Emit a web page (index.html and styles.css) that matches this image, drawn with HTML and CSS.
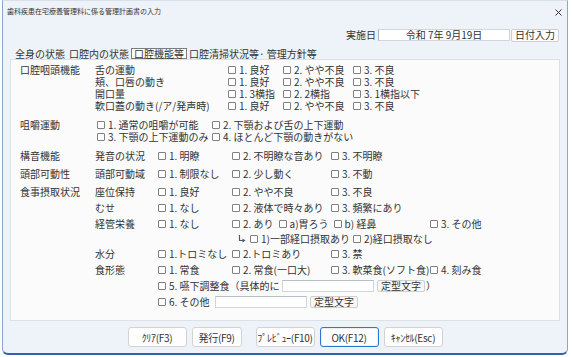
FILE: index.html
```html
<!DOCTYPE html>
<html lang="ja">

<head>
    <meta charset="UTF-8">
    <meta name="viewport" content="width=device-width, initial-scale=1.0">
    <title>歯科疾患在宅療養管理料に係る管理計画書の入力</title>
    <link rel="stylesheet" href="styles.css">
</head>

<body>

    <div class="window">
        <div class="titlebar">
            <span class="title">歯科疾患在宅療養管理料に係る管理計画書の入力</span>
            <svg class="close" width="7" height="7" viewBox="0 0 7 7">
                <path d="M0.5 0.5 L6.5 6.5 M6.5 0.5 L0.5 6.5" stroke="#333" stroke-width="1" fill="none" />
            </svg>
        </div>

        <div class="date-row">
            <span class="date-label">実施日</span>
            <div class="date-field">令和 7年 9月19日</div>
            <button class="button small">日付入力</button>
        </div>

        <div class="tabs">
            <span class="tab">全身の状態</span>
            <span class="tab">口腔内の状態</span>
            <span class="tab active">口腔機能等</span>
            <span class="tab">口腔清掃状況等· 管理方針等</span>
        </div>

        <div class="panel">
            <!-- 口腔咽頭機能 -->
            <div class="sec sec-oral">
                <span class="label">口腔咽頭機能</span>
                <span class="sub">舌の運動</span>
                <label class="cb"><span class="box"></span>1. 良好</label>
                <label class="cb"><span class="box"></span>2. やや不良</label>
                <label class="cb"><span class="box"></span>3. 不良</label>

                <span class="sub">頬、口唇の動き</span>
                <label class="cb"><span class="box"></span>1. 良好</label>
                <label class="cb"><span class="box"></span>2. やや不良</label>
                <label class="cb"><span class="box"></span>3. 不良</label>

                <span class="sub">開口量</span>
                <label class="cb"><span class="box"></span>1. 3横指</label>
                <label class="cb"><span class="box"></span>2. 2横指</label>
                <label class="cb"><span class="box"></span>3. 1横指以下</label>

                <span class="sub">軟口蓋の動き(/ア/発声時)</span>
                <label class="cb"><span class="box"></span>1. 良好</label>
                <label class="cb"><span class="box"></span>2. やや不良</label>
                <label class="cb"><span class="box"></span>3. 不良</label>
            </div>

            <!-- 咀嚼運動 -->
            <div class="sec sec-chew">
                <span class="label">咀嚼運動</span>
                <label class="cb"><span class="box"></span>1. 通常の咀嚼が可能</label>
                <label class="cb"><span class="box"></span>2. 下顎および舌の上下運動</label>
                <label class="cb sub"><span class="box"></span>3. 下顎の上下運動のみ</label>
                <label class="cb"><span class="box"></span>4. ほとんど下顎の動きがない</label>
            </div>

            <!-- 構音機能 -->
            <div class="sec sec-main sec-speech">
                <span class="label">構音機能</span>
                <span class="sub">発音の状況</span>
                <label class="cb"><span class="box"></span>1. 明瞭</label>
                <label class="cb"><span class="box"></span>2. 不明瞭な音あり</label>
                <label class="cb"><span class="box"></span>3. 不明瞭</label>
            </div>

            <!-- 頭部可動性 -->
            <div class="sec sec-main">
                <span class="label">頭部可動性</span>
                <span class="sub">頭部可動域</span>
                <label class="cb"><span class="box"></span>1. 制限なし</label>
                <label class="cb"><span class="box"></span>2. 少し動く</label>
                <label class="cb"><span class="box"></span>3. 不動</label>
            </div>

            <!-- 食事摂取状況 -->
            <div class="sec sec-main sec-food">
                <span class="label">食事摂取状況</span>
                <span class="sub">座位保持</span>
                <label class="cb"><span class="box"></span>1. 良好</label>
                <label class="cb"><span class="box"></span>2. やや不良</label>
                <label class="cb"><span class="box"></span>3. 不良</label>

                <span class="sub">むせ</span>
                <label class="cb"><span class="box"></span>1. なし</label>
                <label class="cb"><span class="box"></span>2. 液体で時々あり</label>
                <label class="cb"><span class="box"></span>3. 頻繁にあり</label>

                <span class="sub">経管栄養</span>
                <label class="cb"><span class="box"></span>1. なし</label>
                <div class="group span-2">
                    <label class="cb"><span class="box"></span>2. あり</label>
                    <label class="cb"><span class="box"></span>a)胃ろう</label>
                    <label class="cb"><span class="box"></span>b) 経鼻</label>
                </div>
                <label class="cb"><span class="box"></span>3. その他</label>

                <div class="group from-4 arrow-row">
                    <svg class="arrow" width="8" height="8" viewBox="0 0 8 8">
                        <path d="M1.5 0 V5.5 H5" stroke="#4a5a70" stroke-width="1.2" fill="none" />
                        <path d="M4.5 3.5 L7.5 5.5 L4.5 7.5 Z" fill="#4a5a70" />
                    </svg>
                    <label class="cb"><span class="box"></span>1)一部経口摂取あり</label>
                    <label class="cb"><span class="box"></span>2)経口摂取なし</label>
                </div>

                <span class="sub">水分</span>
                <label class="cb"><span class="box"></span>1.トロミなし</label>
                <label class="cb"><span class="box"></span>2.トロミあり</label>
                <label class="cb"><span class="box"></span>3. 禁</label>

                <span class="sub">食形態</span>
                <label class="cb"><span class="box"></span>1. 常食</label>
                <label class="cb"><span class="box"></span>2. 常食(一口大)</label>
                <label class="cb"><span class="box"></span>3. 軟菜食(ソフト食)</label>
                <label class="cb"><span class="box"></span>4. 刻み食</label>

                <div class="group from-3">
                    <label class="cb lead-5"><span class="box"></span>5. 嚥下調整食（具体的に</label>
                    <div class="field"></div>
                    <button class="button fixed">定型文字</button>
                    <span class="paren">）</span>
                </div>

                <div class="group from-3">
                    <label class="cb lead-6"><span class="box"></span>6. その他</label>
                    <div class="field"></div>
                    <button class="button fixed">定型文字</button>
                </div>
            </div>
        </div>

        <div class="actions">
            <button class="button action">ｸﾘｱ(F3)</button>
            <button class="button action narrow">発行(F9)</button>
            <button class="button action">ﾌﾟﾚﾋﾞｭｰ(F10)</button>
            <button class="button action focused">OK(F12)</button>
            <button class="button action">ｷｬﾝｾﾙ(Esc)</button>
        </div>
    </div>

</body>

</html>
```

FILE: styles.css
```css
body {
    margin: 0;
    padding: 0;
    background-color: #ffffff;
    font-family: "Noto Sans CJK JP", "Noto Sans", sans-serif;
    font-size: 10px;
    color: #333;
}

.window {
    width: 566px;
    height: 355px;
    margin-left: 2px;
    box-sizing: border-box;
    background-color: #eef3f9;
    border: 1px solid #8ea7c8;
    border-top-color: #d8e0ea;
    border-bottom: 2px solid #2f64a8;
    border-radius: 0 0 6px 6px;
    display: flex;
    flex-direction: column;
}

.titlebar {
    height: 20px;
    display: flex;
    align-items: center;
    justify-content: space-between;
    padding: 0 5px 0 4px;
}

.title {
    font-size: 7px;
    line-height: 8px;
    color: #333;
}

.close {
    margin-top: 2px;
}

.date-row {
    height: 12px;
    margin-top: 8px;
    padding-right: 8px;
    display: flex;
    justify-content: flex-end;
    align-items: center;
}

.date-label {
    margin-right: 2px;
    line-height: 12px;
}

.date-field {
    width: 132px;
    height: 12px;
    box-sizing: border-box;
    background-color: #fff;
    border: 1px solid #d0d6de;
    border-left-color: #a9b0b8;
    text-align: center;
    line-height: 10px;
}

.button {
    font-family: inherit;
    font-size: 10px;
    color: #333;
    padding: 0;
    background-color: #fdfdfd;
    border: 1px solid #cfcfcf;
    border-radius: 2px;
    box-sizing: border-box;
    white-space: nowrap;
}

.button.small {
    width: 48px;
    height: 13px;
    line-height: 10px;
    margin-left: 1px;
}

.tabs {
    height: 11px;
    margin-top: 7px;
    padding-left: 10px;
    display: flex;
}

.tab {
    padding: 0 2px;
    line-height: 11px;
    white-space: nowrap;
}

.tab.active {
    background-color: #fff;
    border: 1px solid #7d7d7d;
    line-height: 9px;
}

.panel {
    width: 550px;
    height: 262px;
    margin-left: 7px;
    box-sizing: border-box;
    background-color: #fbfbfb;
    border: 1px solid #dde1e6;
    padding: 4px 0 0 9px;
}

.sec {
    display: grid;
    grid-auto-rows: 12px;
    align-items: center;
    line-height: 12px;
    white-space: nowrap;
}

.sec-oral {
    grid-template-columns: 75px 133px 55px 70px auto;
}

.sec-chew {
    grid-template-columns: 77px 115px auto;
    margin-top: 7px;
}

.sec-main {
    grid-template-columns: 75px 63px 74px 99px 99px auto;
    grid-auto-rows: 16px;
    margin-top: 2px;
}

.sec-speech {
    margin-top: 5px;
}

.sec-food {
    grid-template-rows: 16px 16px 16px 14px 16px 16px 16px 16px;
}

.label {
    grid-column: 1;
}

.sub {
    grid-column: 2;
}

.cb {
    display: inline-flex;
    align-items: center;
    line-height: 12px;
}

.box {
    width: 8px;
    height: 8px;
    box-sizing: border-box;
    background-color: #fff;
    border: 1px solid #808080;
    border-radius: 1px;
    margin-right: 3px;
}

.group {
    display: flex;
    align-items: center;
}

.span-2 {
    grid-column: 4 / span 2;
    gap: 5px;
}

.from-4 {
    grid-column: 4 / -1;
}

.from-3 {
    grid-column: 3 / -1;
}

.arrow-row {
    gap: 3px;
}

.arrow {
    margin: 0 1px 0 6px;
}

.lead-5 {
    width: 124px;
}

.lead-6 {
    width: 57px;
}

.field {
    width: 92px;
    height: 12px;
    box-sizing: border-box;
    background-color: #fff;
    border: 1px solid #d0d6de;
    border-top-color: #b8bec6;
}

.button.fixed {
    width: 48px;
    height: 12px;
    line-height: 10px;
    margin-left: 3px;
    background-color: #f7f7f7;
}

.paren {
    margin-left: 1px;
}

.actions {
    margin-top: 6px;
    display: flex;
    justify-content: center;
    gap: 5px;
}

.button.action {
    width: 59px;
    height: 20px;
    border-radius: 3px;
    background-color: #fefefe;
    border-color: #d3d3d3;
    letter-spacing: -0.3px;
}

.button.narrow {
    width: 50px;
    margin-right: 9px;
}

.button.focused {
    border-color: #2a78d0;
    box-shadow: inset 0 0 0 1px #e6effa;
}
```
